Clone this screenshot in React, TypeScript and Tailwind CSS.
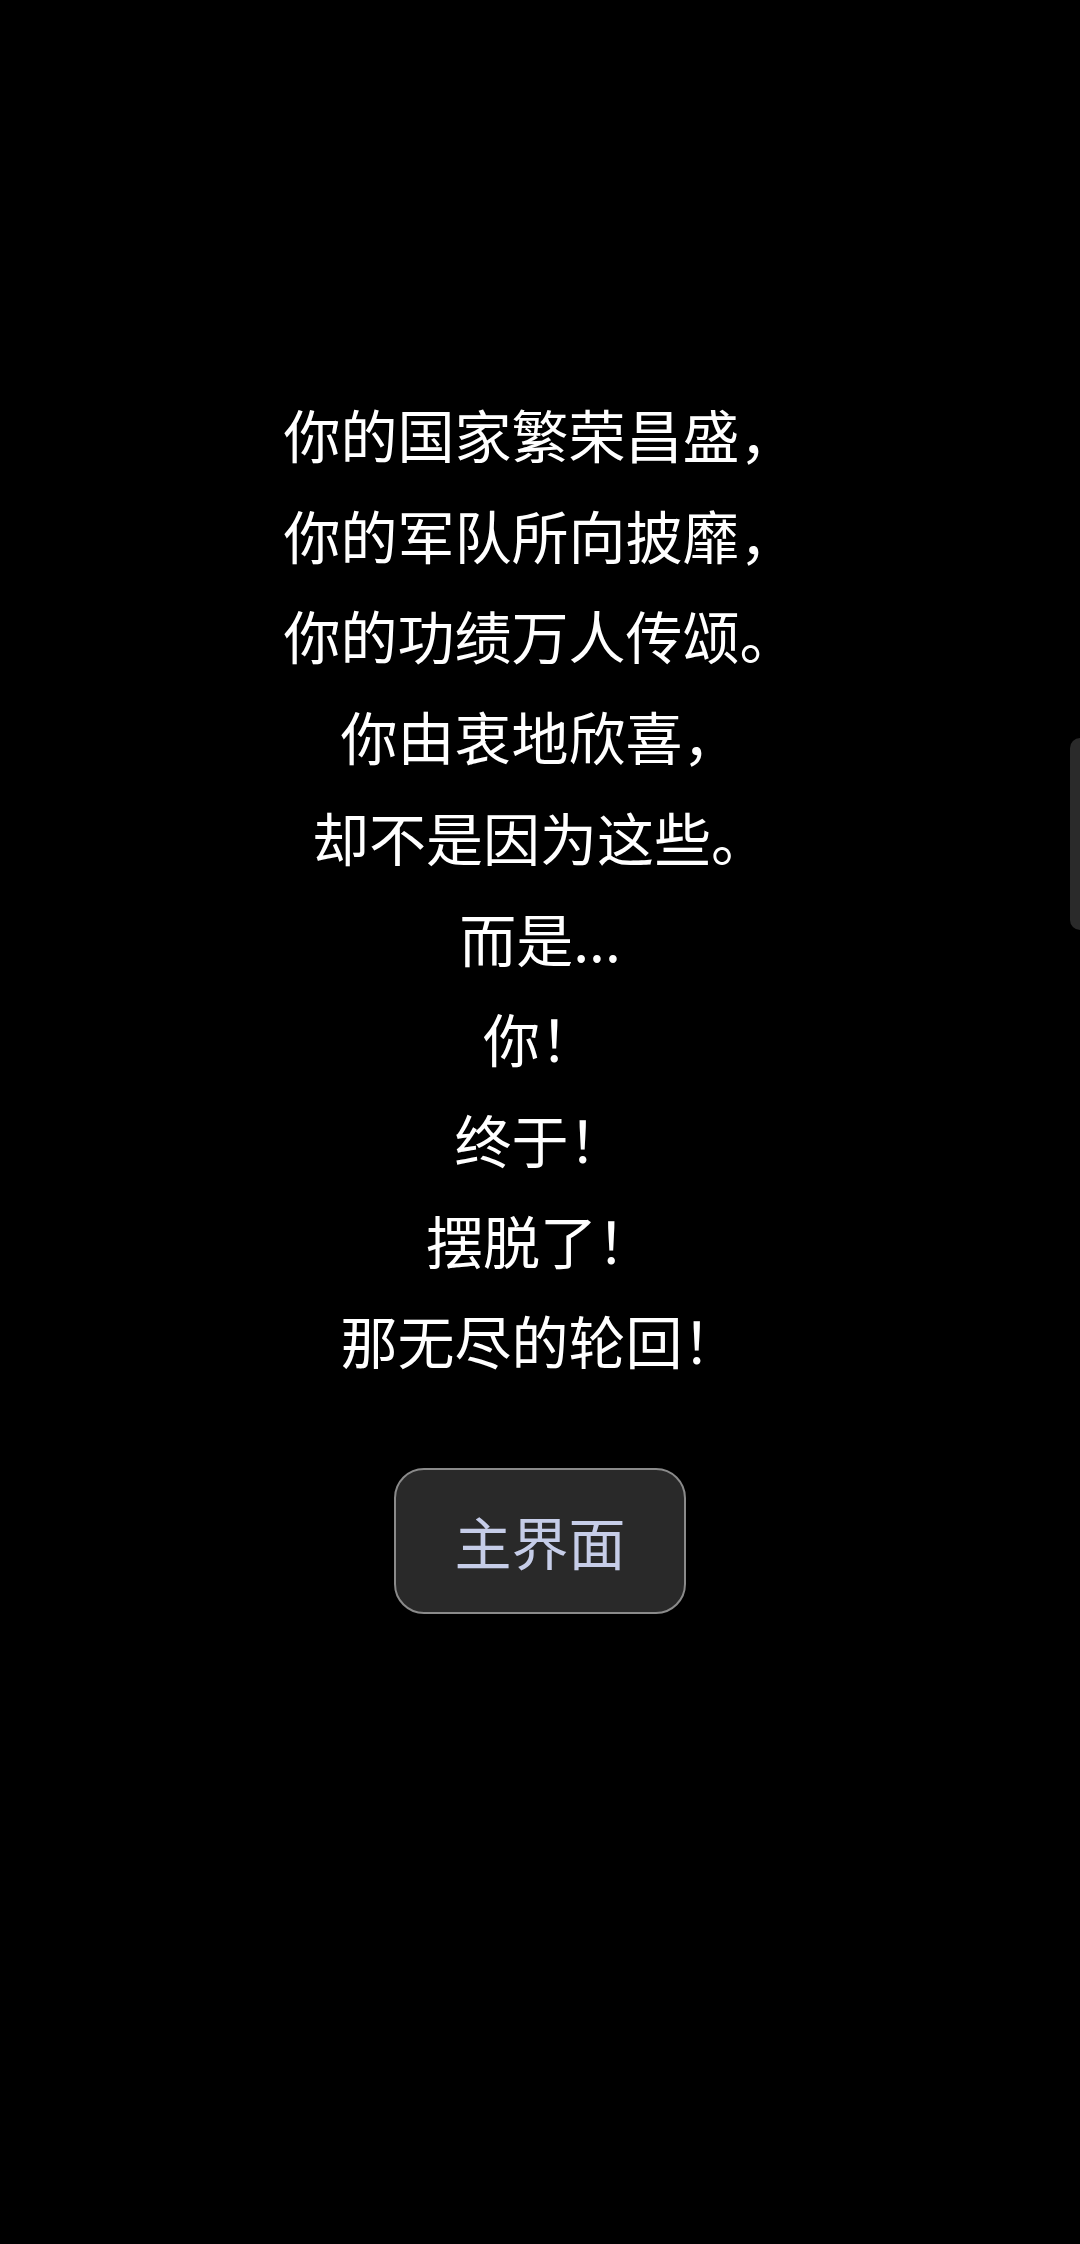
import React from 'react';

const lines = [
  '你的国家繁荣昌盛，',
  '你的军队所向披靡，',
  '你的功绩万人传颂。',
  '你由衷地欣喜，',
  '却不是因为这些。',
  '而是...',
  '你！',
  '终于！',
  '摆脱了！',
  '那无尽的轮回！',
];

export default function App() {
  return (
    <div
      className="relative min-h-[2244px] w-full bg-black flex flex-col items-center pt-[383px]"
      style={{ fontFamily: '"Noto Sans CJK SC", "Noto Sans", sans-serif' }}
    >
      <div className="w-full text-center text-white text-[57px] leading-[100.7px]">
        {lines.map((line, i) => (
          <div key={i}>{line}</div>
        ))}
      </div>

      <button className="mt-[78px] w-[292px] h-[146px] rounded-[30px] border-2 border-[#8a8a8a] bg-[#292929] text-[57px] text-[#c6cde8] flex items-center justify-center">
        主界面
      </button>

      {/* edge handle on the right */}
      <div className="absolute right-0 top-[738px] w-[10px] h-[192px] rounded-l-[10px] bg-[#2a2a2a]" />
    </div>
  );
}
